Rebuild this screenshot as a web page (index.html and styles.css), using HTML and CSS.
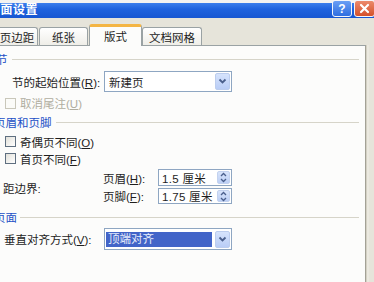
FILE: index.html
```html
<!DOCTYPE html>
<html lang="zh-CN">
<head>
<meta charset="utf-8">
<title>页面设置</title>
<link rel="stylesheet" href="styles.css">
</head>
<body>
<div class="dialog">
  <div class="titlebar">
    <span class="title">页面设置</span>
    <span class="tbtn help">?</span>
    <span class="tbtn close"><svg width="11" height="11" viewBox="0 0 11 11"><path d="M2 2 L9 9 M9 2 L2 9" stroke="#fff" stroke-width="2.2" stroke-linecap="round"/></svg></span>
  </div>
  <div class="tabs">
    <div class="tab first">页边距</div>
    <div class="tab t2">纸张</div>
    <div class="tab active">版式</div>
    <div class="tab t4">文档网格</div>
  </div>
  <div class="panel">
    <div class="sec s1"><span class="slbl">节</span><span class="line"></span></div>
    <div class="row r1">
      <span class="lbl">节的起始位置(<u>R</u>):</span>
      <div class="select"><span class="val">新建页</span><span class="dd"><svg width="9" height="7" viewBox="0 0 9 7"><path d="M1.5 1.5 L4.5 4.5 L7.5 1.5" fill="none" stroke="#4a5f8c" stroke-width="1.8"/></svg></span></div>
    </div>
    <div class="row r2 disabled"><span class="cb"></span><span class="cbt">取消尾注(<u>U</u>)</span></div>
    <div class="sec s2"><span class="slbl">页眉和页脚</span><span class="line"></span></div>
    <div class="row r3"><span class="cb"></span><span class="cbt">奇偶页不同(<u>O</u>)</span></div>
    <div class="row r4"><span class="cb"></span><span class="cbt">首页不同(<u>F</u>)</span></div>
    <div class="margins">
      <span class="mlbl">距边界:</span>
      <span class="slabel">页眉(<u>H</u>):</span>
      <div class="spin"><span class="val">1.5 厘米</span><span class="sbtn"><svg width="7" height="11" viewBox="0 0 7 11"><path d="M1 4 L3.5 1.5 L6 4 M1 7 L3.5 9.5 L6 7" fill="none" stroke="#4a5f8c" stroke-width="1.3"/></svg></span></div>
      <span class="slabel">页脚(<u>F</u>):</span>
      <div class="spin"><span class="val">1.75 厘米</span><span class="sbtn"><svg width="7" height="11" viewBox="0 0 7 11"><path d="M1 4 L3.5 1.5 L6 4 M1 7 L3.5 9.5 L6 7" fill="none" stroke="#4a5f8c" stroke-width="1.3"/></svg></span></div>
    </div>
    <div class="sec s3"><span class="slbl">页面</span><span class="line"></span></div>
    <div class="row r5">
      <span class="lbl">垂直对齐方式(<u>V</u>):</span>
      <div class="select"><span class="hl">顶端对齐</span><span class="dd"><svg width="9" height="7" viewBox="0 0 9 7"><path d="M1.5 1.5 L4.5 4.5 L7.5 1.5" fill="none" stroke="#4a5f8c" stroke-width="1.8"/></svg></span></div>
    </div>
  </div>
</div>
</body>
</html>
```
FILE: styles.css
```css
html, body {
  margin: 0;
  padding: 0;
}
body {
  width: 374px;
  height: 282px;
  overflow: hidden;
  background: #e6e4da;
  font-family: "Liberation Sans", "Noto Sans CJK SC", sans-serif;
  font-size: 11.5px;
  color: #1e1e1e;
}
u {
  text-decoration: underline;
}
.dialog {
  display: flex;
  flex-direction: column;
  height: 282px;
}
.titlebar {
  height: 18px;
  display: flex;
  align-items: flex-start;
  background: linear-gradient(#f3f3f1 0, #f3f3f1 3px, #3b7eec 3px, #1f63de 9px, #1757d2 18px);
}
.title {
  color: #fff;
  font-weight: bold;
  font-size: 12px;
  line-height: 15px;
  margin-top: 3px;
  margin-left: -12px;
  letter-spacing: 0.5px;
}
.tbtn {
  height: 17px;
  box-sizing: border-box;
  border: 1px solid #f4f6fb;
  border-radius: 3px;
  display: flex;
  align-items: center;
  justify-content: center;
}
.help {
  width: 20px;
  margin-left: auto;
  background: linear-gradient(#6a9ff5, #2f6ee0);
  color: #fff;
  font-weight: bold;
  font-size: 12px;
  font-family: "Liberation Sans", sans-serif;
}
.close {
  width: 21px;
  margin-left: 2px;
  margin-right: -1px;
  background: linear-gradient(#ec8a6c, #d4512c);
}
.tabs {
  height: 28px;
  margin-bottom: -1px;
  display: flex;
  align-items: flex-end;
}
.tab {
  height: 19px;
  box-sizing: border-box;
  border: 1px solid #9aa2a4;
  border-bottom: none;
  border-radius: 3px 3px 0 0;
  background: linear-gradient(#ffffff, #eeede7);
  display: flex;
  align-items: center;
  justify-content: center;
  padding-bottom: 1px;
  margin-right: 1px;
}
.tab.first {
  width: 42px;
  margin-left: -4px;
}
.tab.t2 {
  width: 49px;
}
.tab.active {
  position: relative;
  width: 53px;
  height: 22px;
  margin-right: 0;
  background: #fcfcfb;
  border-top: 3px solid #f4b544;
  padding-bottom: 2px;
}
.tab.t4 {
  width: 60px;
  padding-left: 6px;
  justify-content: flex-start;
}
.panel {
  flex: 1;
  width: 366px;
  box-sizing: border-box;
  border-top: 1px solid #9aa2a4;
  border-right: 1px solid #a3a196;
  background: #fcfcfb;
  box-shadow: 1px 0 0 #d4d1c4, 3px 0 0 #ebe9e0;
  padding-right: 6px;
  display: flex;
  flex-direction: column;
}
.sec {
  display: flex;
  align-items: center;
  height: 14px;
  color: #2350c6;
}
.sec .line {
  flex: 1;
  height: 1px;
  background: #d6d4c9;
}
.s1 {
  margin-top: 6px;
}
.s1 .slbl {
  margin-left: -4px;
}
.s1 .line {
  margin-left: 4px;
}
.s2 {
  margin-top: 6px;
}
.s2 .slbl {
  margin-left: -6px;
}
.s2 .line {
  margin-left: 4px;
}
.s3 {
  margin-top: 6px;
}
.s3 .slbl {
  margin-left: -6px;
}
.s3 .line {
  margin-left: 3px;
}
.row {
  display: flex;
  align-items: center;
}
.r1 {
  margin-top: 5px;
  height: 21px;
  padding-left: 12px;
}
.r1 .lbl {
  width: 92px;
}
.r5 {
  margin-top: 4px;
  height: 22px;
  padding-left: 4px;
}
.r5 .lbl {
  width: 100px;
}
.select {
  width: 128px;
  height: 100%;
  box-sizing: border-box;
  border: 1px solid #8ea6c2;
  background: #fff;
  display: flex;
  align-items: center;
  padding: 0 1px 0 1px;
}
.select .val {
  flex: 1;
  padding-left: 3px;
}
.hl {
  flex: 1;
  height: 15px;
  line-height: 15px;
  margin-right: 3px;
  padding-left: 2px;
  background: #4264c8;
  color: #e6ecfb;
}
.dd {
  width: 15px;
  height: 17px;
  box-sizing: border-box;
  border: 1px solid #bccdee;
  border-radius: 2px;
  background: linear-gradient(#d6e3fc, #b9cdf6);
  display: flex;
  align-items: center;
  justify-content: center;
}
.cb {
  width: 11px;
  height: 11px;
  box-sizing: border-box;
  border: 1px solid #5f6f80;
  background: linear-gradient(135deg, #e2e1da, #ffffff);
  margin-left: 5px;
}
.cbt {
  margin-left: 4px;
}
.r2 {
  margin-top: 5px;
  height: 12px;
}
.disabled .cb {
  border-color: #c9c7ba;
  background: #fbfbf8;
}
.disabled .cbt {
  color: #b0ad9f;
}
.r3 {
  margin-top: 7px;
  height: 11px;
}
.r4 {
  margin-top: 6px;
  height: 11px;
}
.margins {
  margin-top: 5px;
  display: grid;
  grid-template-columns: 100px 55px 74px;
  grid-template-rows: 17px 16px;
  row-gap: 2px;
  padding-left: 3px;
  align-items: center;
}
.mlbl {
  grid-row: 1 / 3;
  grid-column: 1;
  padding-top: 3px;
}
.spin {
  height: 100%;
  box-sizing: border-box;
  border: 1px solid #8ea6c2;
  background: #fff;
  display: flex;
  align-items: center;
  padding: 0 1px 0 3px;
}
.spin .val {
  flex: 1;
  letter-spacing: 0.3px;
}
.sbtn {
  width: 13px;
  height: calc(100% - 2px);
  box-sizing: border-box;
  border: 1px solid #c3d2ef;
  border-radius: 2px;
  background: linear-gradient(#d8e4fb, #bccff5);
  display: flex;
  align-items: center;
  justify-content: center;
}
```
